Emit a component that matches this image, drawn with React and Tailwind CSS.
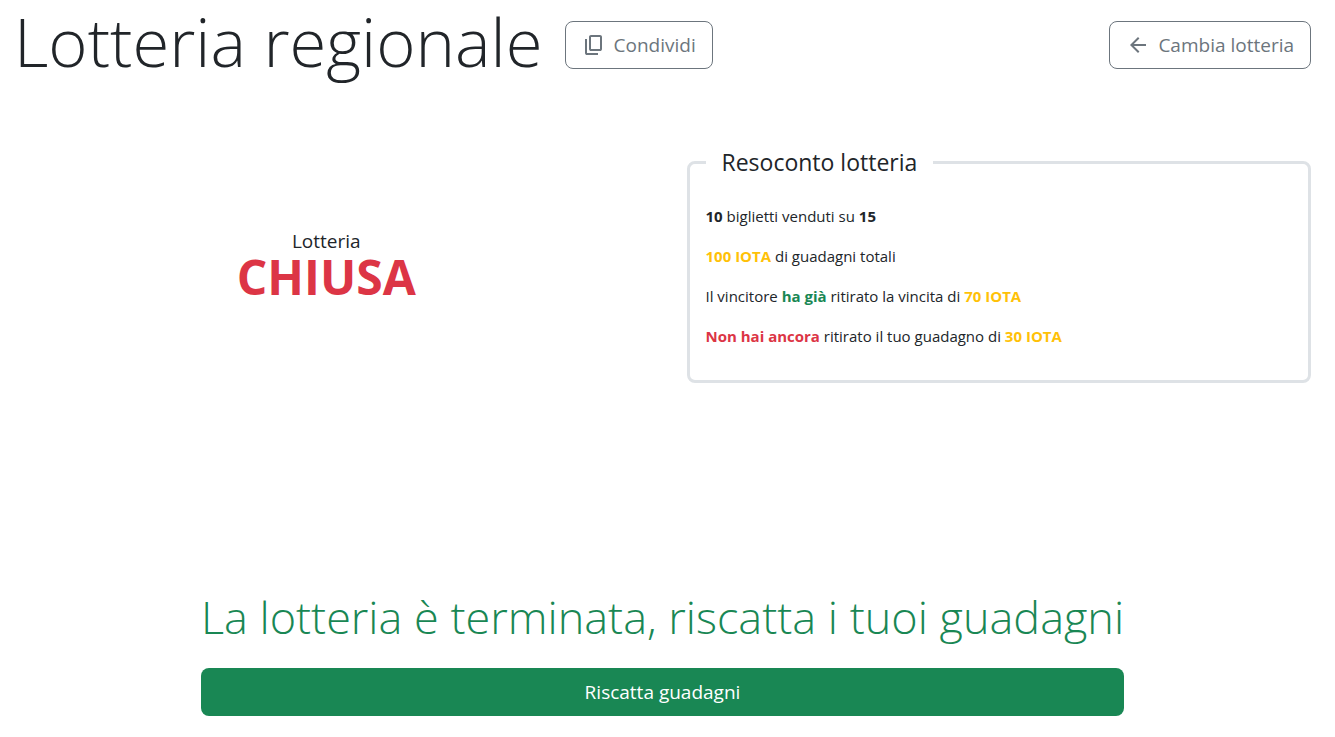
import React from "react";

function CopyIcon() {
  return (
    <svg className="size-6 shrink-0" viewBox="0 0 24 24" fill="currentColor" aria-hidden="true">
      <path d="M9 18q-.825 0-1.413-.587T7 16V4q0-.825.588-1.413T9 2h9q.825 0 1.413.588T20 4v12q0 .825-.587 1.413T18 18zm0-2h9V4H9zm-4 6q-.825 0-1.413-.587T3 20V6h2v14h11v2z" />
    </svg>
  );
}

function ArrowIcon() {
  return (
    <svg className="size-6 shrink-0" viewBox="0 0 24 24" fill="currentColor" aria-hidden="true">
      <path d="m7.825 13l5.6 5.6L12 20l-8-8l8-8l1.425 1.4l-5.6 5.6H20v2z" />
    </svg>
  );
}

function OutlineButton({ children }) {
  return (
    <button type="button" className="flex h-12 shrink-0 items-center gap-2 rounded-lg border border-[#6c757d] px-4 text-[19px] text-[#6c757d]">
      {children}
    </button>
  );
}

function Iota({ amount }) {
  return <strong className="font-bold text-[#ffc107]">{amount} IOTA</strong>;
}

export default function App() {
  return (
    <main className="bg-white pr-6 pb-5 pl-3.5 font-['Open_Sans','Noto_Sans',sans-serif] text-[#212529]">
      <header className="flex items-center justify-between">
        <div className="flex items-center gap-[22px]">
          <h1 className="pb-2 text-[67px] leading-[82px] font-light">Lotteria regionale</h1>
          <OutlineButton><CopyIcon />Condividi</OutlineButton>
        </div>
        <OutlineButton><ArrowIcon />Cambia lotteria</OutlineButton>
      </header>

      <div className="mt-[54px] grid grid-cols-2 gap-12">
        <section className="pt-[85px] text-center">
          <p className="text-[19px] leading-6">Lotteria</p>
          <p className="text-5xl font-bold text-[#dc3545]">CHIUSA</p>
        </section>
        <fieldset className="rounded-lg border-3 border-[#dee2e6] px-4 pb-8">
          <legend className="px-4 text-[23px] leading-9">Resoconto lotteria</legend>
          <div className="flex flex-col gap-4 pt-6 text-[15px] leading-6">
            <p><strong>10</strong> biglietti venduti su <strong>15</strong></p>
            <p><Iota amount={100} /> di guadagni totali</p>
            <p>Il vincitore <strong className="text-[#198754]">ha già</strong> ritirato la vincita di <Iota amount={70} /></p>
            <p><strong className="text-[#dc3545]">Non hai ancora</strong> ritirato il tuo guadagno di <Iota amount={30} /></p>
          </div>
        </fieldset>
      </div>

      <section className="mx-auto mt-[207px] w-fit text-center">
        <h2 className="text-[45px] leading-[54px] font-light text-[#198754]">La lotteria è terminata, riscatta i tuoi guadagni</h2>
        <button type="button" className="mt-6 h-12 w-full rounded-lg bg-[#198754] text-[19px] text-white">Riscatta guadagni</button>
      </section>
    </main>
  );
}
